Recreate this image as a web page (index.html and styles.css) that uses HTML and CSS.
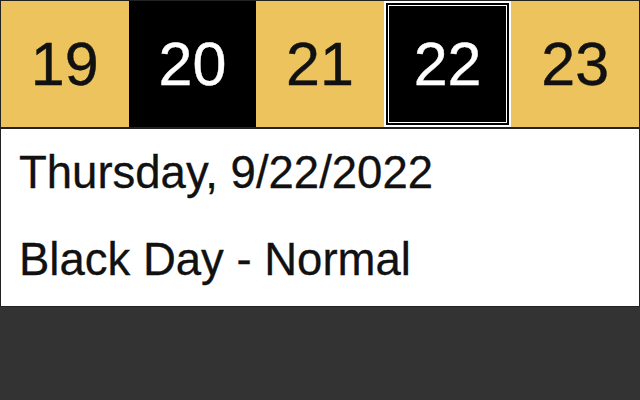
FILE: index.html
```html
<!DOCTYPE html>
<html>
<head>
<meta charset="utf-8">
<link rel="stylesheet" href="styles.css">
</head>
<body>
<div class="strip">
  <div class="day gold">19</div>
  <div class="day black">20</div>
  <div class="day gold">21</div>
  <div class="day black selected">22</div>
  <div class="day gold">23</div>
</div>
<div class="panel">
  <div class="line">Thursday, 9/22/2022</div>
  <div class="line">Black Day - Normal</div>
</div>
</body>
</html>
```
FILE: styles.css
```css
html, body {
  margin: 0;
  padding: 0;
  background: #333333;
  width: 640px;
  height: 400px;
  overflow: hidden;
  font-family: "Liberation Sans", Arial, sans-serif;
}
.strip {
  display: flex;
  border: 1px solid #222;
  height: 126px;
}
.day {
  flex: 1 1 0;
  display: flex;
  align-items: center;
  justify-content: center;
  font-size: 61px;
  line-height: 1;
  -webkit-text-stroke: 0.4px currentColor;
}
.gold {
  background: #ecc35c;
  color: #111;
}
.black {
  background: #000;
  color: #fff;
}
.selected {
  box-shadow: inset 0 0 0 2px #fff, inset 0 0 0 4px #000, inset 0 0 0 5px #fff;
}
.panel {
  background: #fff;
  border: 1px solid #222;
  padding: 0 18px 3px 18px;
  color: #111;
}
.line {
  font-size: 45.5px;
  line-height: 87px;
  -webkit-text-stroke: 0.3px currentColor;
}
```
